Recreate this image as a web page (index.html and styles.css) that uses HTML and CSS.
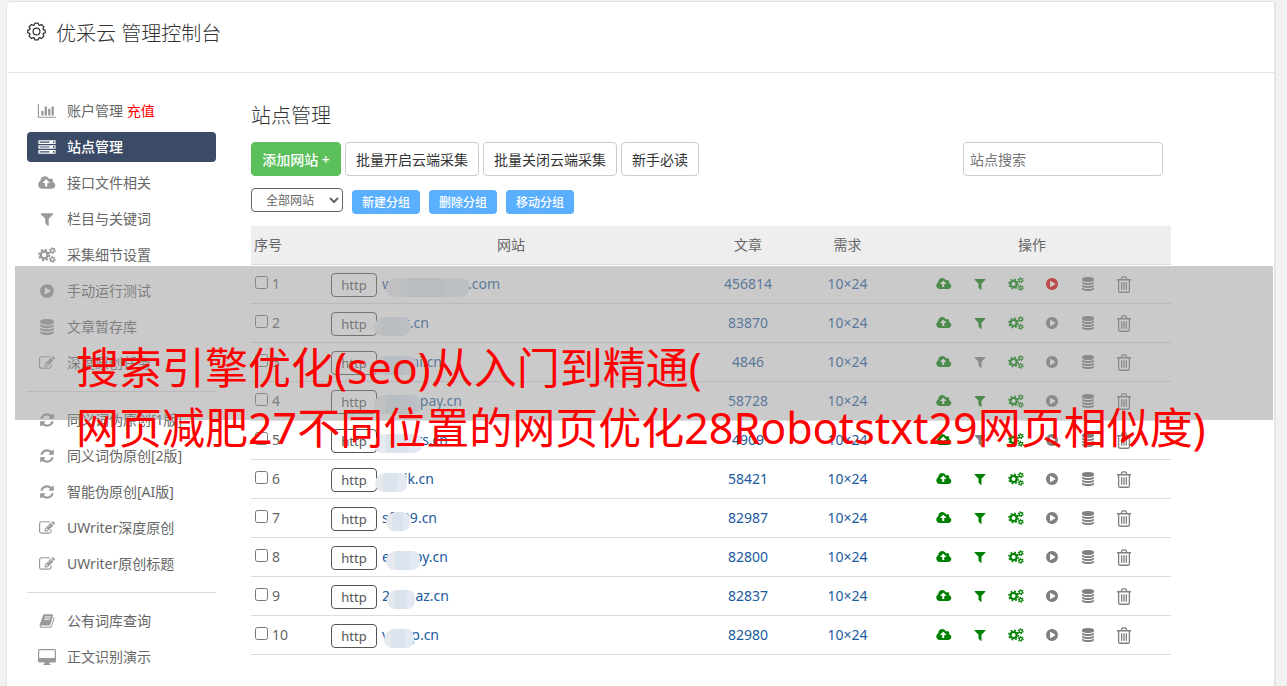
FILE: index.html
```html
<!DOCTYPE html>
<html lang="zh-CN">
<head>
    <meta charset="UTF-8">
    <meta name="viewport" content="width=device-width, initial-scale=1.0">
    <title>优采云 管理控制台</title>
    <link rel="stylesheet" href="styles.css">
</head>

<body>
<svg class="sprite" xmlns="http://www.w3.org/2000/svg">
    <symbol id="i-chart" viewBox="0 0 2048 1792"><path d="M640 896v512h-256v-512h256zm384-512v1024h-256v-1024h256zm1024 1152v128h-2048v-1536h128v1408h1920zm-640-896v768h-256v-768h256zm384-256v1024h-256v-1024h256z"/></symbol>
    <symbol id="i-server" viewBox="0 0 1792 1664"><path fill-rule="evenodd" d="M0 128h1792v384h-1792zM128 256v128h1024v-128zM0 640h1792v384h-1792zM128 768v128h1024v-128zM0 1152h1792v384h-1792zM128 1280v128h1024v-128zM1504 320a96 96 0 1 0 192 0a96 96 0 1 0-192 0zM1504 832a96 96 0 1 0 192 0a96 96 0 1 0-192 0zM1504 1344a96 96 0 1 0 192 0a96 96 0 1 0-192 0z"/></symbol>
    <symbol id="i-cloud" viewBox="0 0 1856 1792"><path d="M1216 864q0-14-9-23l-352-352q-9-9-23-9t-23 9l-351 351q-10 12-10 24 0 14 9 23t23 9h224v352q0 13 9.5 22.5t22.5 9.5h192q13 0 22.5-9.5t9.5-22.5v-352h224q13 0 22.5-9.5t9.5-22.5zm640 288q0 159-112.5 271.5t-271.5 112.5h-1088q-185 0-316.5-131.5t-131.5-316.5q0-130 70-240t188-165q-2-30-2-43 0-212 150-362t362-150q156 0 285.5 87t188.5 231q71-62 166-62 106 0 181 75t75 181q0 76-41 138 130 31 213.5 135.5t83.5 238.5z"/></symbol>
    <symbol id="i-filter" viewBox="0 0 1792 1792"><path d="M1595 295q17 41-14 70l-493 493v742q0 42-39 59-13 5-25 5-27 0-45-19l-256-256q-19-19-19-45v-486l-493-493q-31-29-14-70 17-39 59-39h1280q42 0 59 39z"/></symbol>
    <symbol id="i-cogs" viewBox="0 0 18 16">
        <g fill="none" stroke="currentColor">
            <circle cx="6.2" cy="8" r="3.5" stroke-width="2.4"/>
            <circle cx="6.2" cy="8" r="5.3" stroke-width="1.8" stroke-dasharray="2.1 2.06"/>
            <circle cx="14.4" cy="3.6" r="1.8" stroke-width="1.4"/>
            <circle cx="14.4" cy="3.6" r="2.8" stroke-width="1.3" stroke-dasharray="1.4 1.53"/>
            <circle cx="14.4" cy="12.4" r="1.8" stroke-width="1.4"/>
            <circle cx="14.4" cy="12.4" r="2.8" stroke-width="1.3" stroke-dasharray="1.4 1.53"/>
        </g>
    </symbol>
    <symbol id="i-play" viewBox="0 0 1792 1792"><path d="M896 128q209 0 385.500 103t279.500 279.500 103 385.500-103 385.500-279.500 279.500-385.500 103-385.500-103-279.500-279.500-103-385.500 103-385.500 279.500-279.500 385.500-103zm384 823q32-18 32-55t-32-55l-544-320q-31-19-64-1-32 19-32 56v640q0 37 32 56 16 8 32 8 17 0 32-9z"/></symbol>
    <symbol id="i-data" viewBox="128 0 1536 1792"><path d="M896 768q237 0 443-43t325-127v170q0 69-103 128t-280 93.500-385 34.500-385-34.500-280-93.500-103-128v-170q119 84 325 127t443 43zm0 768q237 0 443-43t325-127v170q0 69-103 128t-280 93.500-385 34.500-385-34.500-280-93.500-103-128v-170q119 84 325 127t443 43zm0-384q237 0 443-43t325-127v170q0 69-103 128t-280 93.500-385 34.500-385-34.500-280-93.500-103-128v-170q119 84 325 127t443 43zm0-1152q208 0 385 34.500t280 93.500 103 128v128q0 69-103 128t-280 93.500-385 34.500-385-34.500-280-93.500-103-128v-128q0-69 103-128t280-93.500 385-34.500z"/></symbol>
    <symbol id="i-edit" viewBox="0 0 1792 1792"><path d="M888 1184l116-116-152-152-116 116v56h96v96h56zm440-720q-16-16-33 1l-350 350q-17 17-1 33t33-1l350-350q17-17 1-33zm80 594v190q0 119-84.500 203.500t-203.500 84.500h-832q-119 0-203.500-84.500t-84.500-203.500v-832q0-119 84.500-203.500t203.500-84.500h832q63 0 117 25 15 7 18 23 3 17-9 29l-49 49q-14 14-32 8-23-6-45-6h-832q-66 0-113 47t-47 113v832q0 66 47 113t113 47h832q66 0 113-47t47-113v-126q0-13 9-22l64-64q15-15 35-7t20 29zm-96-738l288 288-672 672h-288v-288zm444 132l-92 92-288-288 92-92q28-28 68-28t68 28l152 152q28 28 28 68t-28 68z"/></symbol>
    <symbol id="i-refresh" viewBox="0 0 1792 1792"><path d="M1639 1056q0 5-1 7-64 268-268 434.500t-478 166.500q-146 0-282.500-55t-243.500-157l-129 129q-19 19-45 19t-45-19-19-45v-448q0-26 19-45t45-19h448q26 0 45 19t19 45-19 45l-137 137q71 66 161 102t187 36q134 0 250-65t186-179q11-17 53-117 8-23 30-23h192q13 0 22.500 9.500t9.500 22.500zm25-800v448q0 26-19 45t-45 19h-448q-26 0-45-19t-19-45 19-45l138-138q-148-137-349-137-134 0-250 65t-186 179q-11 17-53 117-8 23-30 23h-199q-13 0-22.500-9.500t-9.500-22.500v-7q65-268 270-434.500t480-166.500q146 0 284 55.500t245 156.500l130-129q19-19 45-19t45 19 19 45z"/></symbol>
    <symbol id="i-book" viewBox="0 0 1792 1792"><path d="M1703 478q40 57 18 129l-275 906q-19 64-76.500 107.500t-122.500 43.500h-923q-77 0-148.500-53.500t-99.500-131.500q-24-67-2-127 0-4 3-27t4-37q1-8-3-21.500t-3-19.500q2-11 8-21t16.500-23.500 16.500-23.500q23-38 45-91.500t30-91.500q3-10 .5-30t-.5-28q3-11 17-28t17-23q21-36 42-92t25-90q1-9-2.500-32t.5-28q4-13 22-30.500t22-22.500q19-26 42.500-84.500t27.500-96.500q1-8-3-25.500t-2-26.500q2-8 9-18t18-23 17-21q8-12 16.500-30.500t15-35 16-36 19.500-32 26.500-23.500 36-11.500 47.500 5.500l-1 3q38-9 51-9h761q74 0 114 56t18 130l-274 906q-36 119-71.500 153.500t-128.500 34.500h-869q-27 0-38 15-11 16-1 43 24 70 144 70h923q29 0 56-15.500t35-41.500l300-987q7-22 5-57 38 15 59 43zm-1064 2q-4 13 2 22.500t20 9.500h608q13 0 25.500-9.500t16.500-22.500l21-64q4-13-2-22.500t-20-9.500h-608q-13 0-25.500 9.500t-16.500 22.500zm-83 256q-4 13 2 22.500t20 9.500h608q13 0 25.500-9.500t16.500-22.500l21-64q4-13-2-22.500t-20-9.500h-608q-13 0-25.500 9.500t-16.500 22.500z"/></symbol>
    <symbol id="i-desktop" viewBox="0 0 18 16"><path fill-rule="evenodd" d="M1.500 0h15q1.500 0 1.500 1.500v10.500q0 1.500-1.500 1.500h-5v1.500h1v1h-7v-1h1v-1.500h-5q-1.500 0-1.500-1.500v-10.500q0-1.500 1.500-1.500zM1.200 1.200v7.800h15.600v-7.800z"/></symbol>
    <symbol id="i-trash" viewBox="0 0 16 18"><path fill="none" stroke="currentColor" stroke-width="1.400" d="M.5 4h15M5 4l.6-2q.3-1 1.400-1h2q1.100 0 1.400 1l.6 2M2.300 4v11.500q0 1.700 1.700 1.700h8q1.700 0 1.700-1.700v-11.500M5.500 6.500v8M8 6.500v8M10.500 6.500v8"/></symbol>
    <symbol id="i-gear" viewBox="0 0 20 20">
        <g fill="none" stroke="currentColor" stroke-width="1.300" stroke-linejoin="round">
            <circle cx="10" cy="10" r="3.600"/>
            <path d="M8.200 1.200h3.600l.6 2 1 .4 1.900-1 2.500 2.500-1 1.900.4 1 2 .6v2.800l-2 .6-.4 1 1 1.900-2.500 2.500-1.900-1-1 .4-.6 2h-3.600l-.6-2-1-.4-1.900 1-2.500-2.500 1-1.900-.4-1-2-.6v-2.800l2-.6.4-1-1-1.900 2.500-2.500 1.900 1 1-.4z"/>
        </g>
    </symbol>
</svg>

<div class="panel">
    <header class="panel-head">
        <svg class="gear"><use href="#i-gear"/></svg>
        <h1>优采云 管理控制台</h1>
    </header>
    <div class="panel-body">
        <nav class="sidebar">
            <a href="#"><svg><use href="#i-chart"/></svg>账户管理 <em>充值</em></a>
            <a href="#" class="active"><svg><use href="#i-server"/></svg>站点管理</a>
            <a href="#"><svg><use href="#i-cloud"/></svg>接口文件相关</a>
            <a href="#"><svg><use href="#i-filter"/></svg>栏目与关键词</a>
            <a href="#"><svg><use href="#i-cogs"/></svg>采集细节设置</a>
            <a href="#"><svg><use href="#i-play"/></svg>手动运行测试</a>
            <a href="#"><svg><use href="#i-data"/></svg>文章暂存库</a>
            <a href="#"><svg><use href="#i-edit"/></svg>深度原创任务</a>
            <hr>
            <a href="#"><svg><use href="#i-refresh"/></svg>同义词伪原创[1版]</a>
            <a href="#"><svg><use href="#i-refresh"/></svg>同义词伪原创[2版]</a>
            <a href="#"><svg><use href="#i-refresh"/></svg>智能伪原创[AI版]</a>
            <a href="#"><svg><use href="#i-edit"/></svg>UWriter深度原创</a>
            <a href="#"><svg><use href="#i-edit"/></svg>UWriter原创标题</a>
            <hr>
            <a href="#"><svg><use href="#i-book"/></svg>公有词库查询</a>
            <a href="#"><svg><use href="#i-desktop"/></svg>正文识别演示</a>
        </nav>

        <main class="content">
            <h2>站点管理</h2>
            <div class="toolbar">
                <button type="button" class="btn btn-add">添加网站 +</button>
                <button type="button" class="btn">批量开启云端采集</button>
                <button type="button" class="btn">批量关闭云端采集</button>
                <button type="button" class="btn">新手必读</button>
                <input type="text" class="search" placeholder="站点搜索" aria-label="站点搜索">
            </div>
            <div class="groups">
                <select aria-label="网站分组">
                    <option>全部网站</option>
                </select>
                <button type="button" class="btn-group">新建分组</button>
                <button type="button" class="btn-group">删除分组</button>
                <button type="button" class="btn-group">移动分组</button>
            </div>
            <table class="sites">
                <colgroup>
                    <col class="col-no"><col class="col-site"><col class="col-posts"><col class="col-need"><col class="col-ops">
                </colgroup>
                <thead>
                    <tr><th>序号</th><th>网站</th><th>文章</th><th>需求</th><th>操作</th></tr>
                </thead>
                <tbody id="siteRows"></tbody>
            </table>
        </main>
    </div>
</div>

<div class="banner">
    <p>搜索引擎优化(seo)从入门到精通(<br>网页减肥27不同位置的网页优化28Robotstxt29网页相似度)</p>
</div>

<script>
    // start / end: visible parts of the domain, width: whole domain, maskX / mask: hidden part
    const sites = [
        { start: "w", end: ".com", width: 118, maskX: 4, mask: 83, posts: 456814, filter: "on", play: "stop" },
        { start: "", end: "ilt.cn", width: 47, maskX: -8, mask: 36, posts: 83870, filter: "on" },
        { start: "", end: "ni.cn", width: 60, maskX: -8, mask: 43, posts: 4846, filter: "" },
        { start: "", end: "pay.cn", width: 80, maskX: -8, mask: 46, posts: 58728, filter: "on" },
        { start: "", end: "rs.cn", width: 66, maskX: -8, mask: 48, posts: 4909, filter: "" },
        { start: "", end: "ik.cn", width: 52, maskX: -7, mask: 32, posts: 58421, filter: "on" },
        { start: "sf", end: "39.cn", width: 55, maskX: 4, mask: 24, posts: 82987, filter: "on" },
        { start: "e", end: "oy.cn", width: 66, maskX: 4, mask: 34, posts: 82800, filter: "on" },
        { start: "2", end: "az.cn", width: 67, maskX: 5, mask: 28, posts: 82837, filter: "on" },
        { start: "v", end: "p.cn", width: 57, maskX: 2, mask: 30, posts: 82980, filter: "on" }
    ];

    function op(icon, title, state) {
        return `<a href="#" class="${state || ""}" title="${title}"><svg class="${icon}"><use href="#i-${icon}"/></svg></a>`;
    }

    document.getElementById("siteRows").innerHTML = sites.map((s, i) => `
        <tr>
            <td><label class="pick"><input type="checkbox">${i + 1}</label></td>
            <td>
                <div class="site">
                    <button type="button" class="http">http</button>
                    <a href="#" class="domain" style="width: ${s.width}px">
                        <span>${s.start}</span><span>${s.end}</span>
                        <i class="mask" style="left: ${s.maskX}px; width: ${s.mask}px"></i>
                    </a>
                </div>
            </td>
            <td><a href="#">${s.posts}</a></td>
            <td><a href="#">10×24</a></td>
            <td>
                <div class="ops">
                    ${op("cloud", "接口", "on")}
                    ${op("filter", "栏目", s.filter)}
                    ${op("cogs", "设置", "on")}
                    ${op("play", "运行", s.play)}
                    ${op("data", "暂存库")}
                    ${op("trash", "删除")}
                </div>
            </td>
        </tr>`).join("");
</script>
</body>
</html>
```

FILE: styles.css
```css
* {
    margin: 0;
    padding: 0;
    box-sizing: border-box;
}

body {
    position: relative;
    padding: 1px 11px 0 6px;
    background: #f2f2f2;
    color: #666;
    font-family: "Noto Sans", "Noto Sans CJK SC", sans-serif;
    font-size: 14px;
    line-height: 20px;
    overflow-x: hidden;
}

a {
    color: #1a5a9e;
    text-decoration: none;
}

button,
input,
select {
    font-family: inherit;
}

button {
    cursor: pointer;
}

svg {
    fill: currentColor;
}

.sprite {
    display: none;
}

.panel {
    background: #fff;
    border: 1px solid #e5e5e5;
    border-right-width: 2px;
    border-radius: 4px;
}

.panel-head {
    display: flex;
    gap: 10px;
    height: 71px;
    padding: 16px 20px;
    border-bottom: 1px solid #e5e5e5;
    color: #333;
}

.panel-head .gear {
    width: 19px;
    height: 19px;
    margin-top: 4px;
}

.panel-head h1 {
    font-size: 20px;
    font-weight: 300;
    line-height: 32px;
}

.panel-body {
    display: flex;
    gap: 35px;
    padding: 23px 20px 15px;
}

/* sidebar */
.sidebar {
    flex: 0 0 189px;
}

.sidebar a {
    display: flex;
    align-items: center;
    height: 30px;
    margin-bottom: 6px;
    padding-left: 10px;
    border-radius: 4px;
    color: #666;
    white-space: pre;
}

.sidebar svg {
    width: 20px;
    height: 16px;
    margin-right: 10px;
    color: #999;
}

.sidebar em {
    color: #f00;
    font-style: normal;
}

.sidebar .active {
    background: #3b4a66;
    color: #fff;
    font-weight: 500;
}

.sidebar .active svg {
    color: #fff;
}

.sidebar hr {
    margin: 13px 0;
    border: 0;
    border-top: 1px solid #ddd;
}

/* content */
.content {
    flex: 1;
    max-width: 920px;
    padding-top: 4px;
}

.content h2 {
    margin-bottom: 10px;
    color: #333;
    font-size: 20px;
    font-weight: 300;
    line-height: 32px;
}

.toolbar {
    display: flex;
    gap: 4px;
    padding-right: 8px;
}

.btn {
    height: 34px;
    padding: 0 10px;
    background: #fff;
    border: 1px solid #ccc;
    border-radius: 4px;
    color: #333;
    font-size: 14px;
}

.btn-add {
    width: 90px;
    padding: 0;
    background: #5bc05b;
    border-color: #5bc05b;
    color: #fff;
    font-weight: 500;
}

.search {
    width: 200px;
    height: 34px;
    margin-left: auto;
    padding: 0 6px;
    border: 1px solid #ccc;
    border-radius: 4px;
    font-size: 14px;
}

.search::placeholder {
    color: #757575;
}

.groups {
    display: flex;
    gap: 9px;
    margin: 12px 0;
}

.groups select {
    width: 92px;
    height: 24px;
    padding: 0 0 0 10px;
    background: #fff;
    border: 1px solid #666;
    border-radius: 4px;
    color: #666;
    font-size: 12px;
}

.btn-group {
    width: 68px;
    height: 24px;
    margin-top: 2px;
    background: #5aafff;
    border: 0;
    border-radius: 4px;
    color: #fff;
    font-size: 12px;
    font-weight: 500;
}

/* table */
.sites {
    width: 100%;
    border-collapse: separate;
    border-spacing: 0;
    table-layout: fixed;
}

.col-no {
    width: 77px;
}

.col-site {
    width: 366px;
}

.col-posts {
    width: 108px;
}

.col-need {
    width: 91px;
}

.sites th,
.sites td {
    height: 39px;
    padding: 0 3px;
    border-bottom: 1px solid #ddd;
    font-weight: 400;
    text-align: center;
}

.sites th {
    background: #eee;
}

.sites th:first-child,
.sites td:first-child {
    text-align: left;
}

.pick {
    display: flex;
    gap: 4px;
}

.pick input {
    width: 13px;
    height: 13px;
    margin: 2px 0 0 1px;
}

.site {
    display: flex;
    align-items: center;
    gap: 5px;
}

.http {
    width: 46px;
    height: 24px;
    margin-top: 2px;
    background: #fff;
    border: 1px solid #555;
    border-radius: 4px;
    color: #555;
    font-size: 13px;
}

.domain {
    position: relative;
    display: flex;
    justify-content: space-between;
}

.mask {
    position: absolute;
    top: 4px;
    height: 19px;
    background: linear-gradient(90deg, #e6eaee 25%, #dbe4ed 25%, #dbe4ed 70%, #e2e9f2 70%);
    border-radius: 14px 10px 10px 12px;
}

.ops {
    display: flex;
    padding-left: 30px;
}

.ops a {
    display: flex;
    align-items: center;
    justify-content: center;
    width: 36px;
    color: #808080;
}

.ops .on {
    color: #008000;
}

.ops .stop {
    color: #e60000;
}

.ops svg {
    width: 16px;
    height: 14px;
}

.ops .trash {
    width: 16px;
    height: 17px;
}

/* headline strip over the page */
.banner {
    position: absolute;
    top: 266px;
    left: 15px;
    right: 14px;
    height: 154px;
    padding: 72px 0 0 61px;
    background: rgba(150, 150, 150, .5);
}

.banner p {
    color: #f00;
    font-size: 43px;
    line-height: 60px;
    white-space: nowrap;
}
```
